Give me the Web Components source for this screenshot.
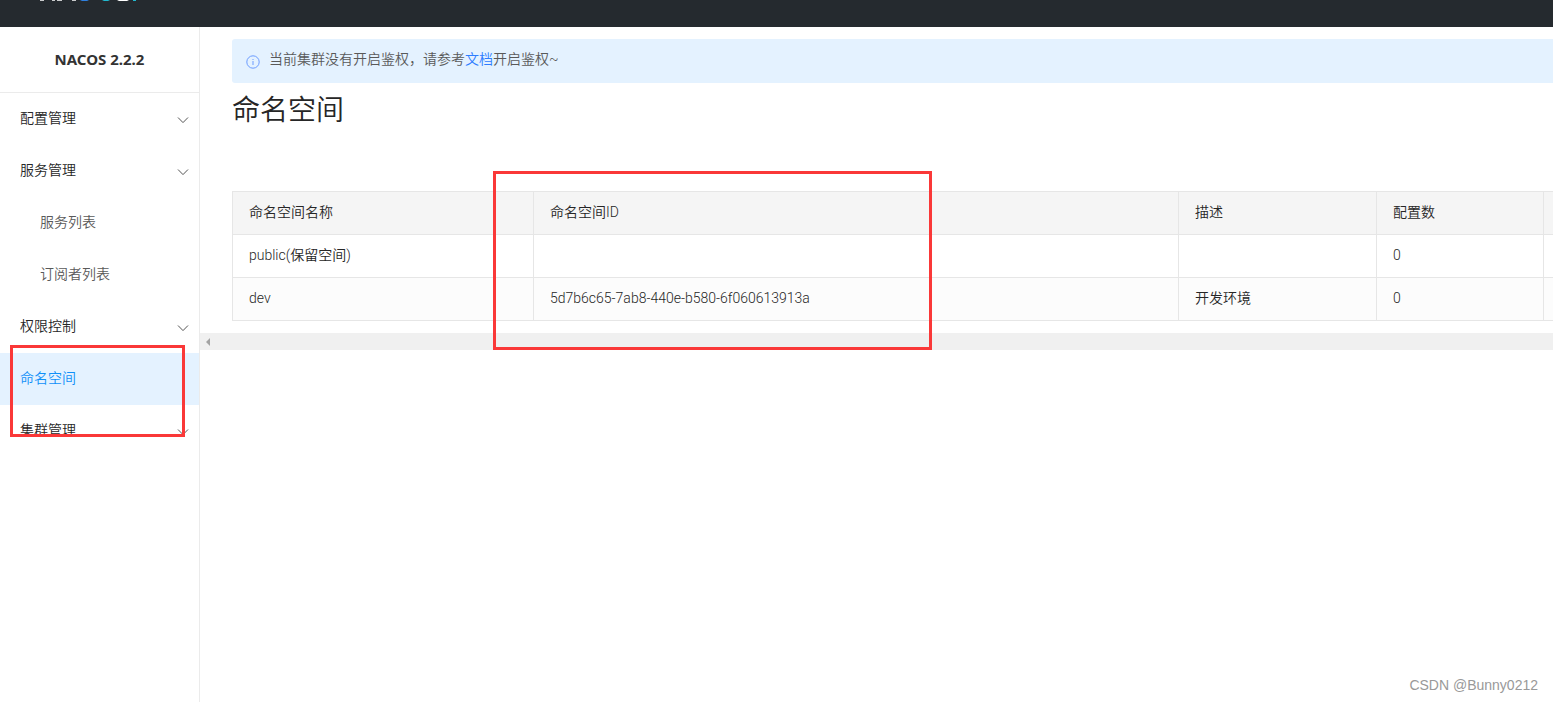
<!DOCTYPE html>
<html lang="zh-CN">
<head>
<meta charset="utf-8">
<title>Nacos</title>
<style>
html,body{margin:0;height:100%}
body{font:350 14px/20px Roboto,"Noto Sans CJK SC",sans-serif;color:#262626;background:#fff;overflow:hidden}
</style>
</head>
<body>
<nacos-app></nacos-app>
<script>
const define=(name,html)=>customElements.define(name,class extends HTMLElement{
  constructor(){
    super();
    const t=document.createElement('template');
    t.innerHTML=html;
    this.attachShadow({mode:'open'}).append(t.content.cloneNode(true));
  }
});

define('top-bar',`
<style>
:host{display:block;height:27px;background:#252a2f}
a{display:block;margin-left:40px;width:100px;height:2px}
svg{display:block}
</style>
<a href="#" aria-label="Nacos"><svg width="100" height="2" viewBox="0 0 100 2">
<path fill="#c9cbcc" d="M0 0h4v1H0zM12 0h3v1h-3zM17 0h5v1h-5zM32 0h4v1h-4z"/>
<path fill="#2f80e0" d="M40 0h9l-2 1h-5z"/><path fill="#22b8cf" d="M62 0h8l-2 1h-4zM93 0h3v1h-3z"/>
<path fill="#fff" d="M77 0h12l-2 1h-8z"/></svg></a>`);

define('menu-item',`
<style>
:host{display:block}
a{display:flex;align-items:center;justify-content:space-between;height:52px;box-sizing:border-box;padding:0 10px 2px 20px;color:inherit;text-decoration:none}
svg{margin-top:4px}
:host([sub]) a{padding-left:40px;color:#595959}
:host([active]) a{background:#e4f2ff;color:#1090f8}
:host(:not([group])) svg{display:none}
</style>
<a href="#"><slot></slot><svg width="12" height="8" viewBox="0 0 12 8" fill="none" stroke="#555"><path d="M1 1.5 6 6.6 11 1.5"/></svg></a>`);

define('side-nav',`
<style>
:host{display:block;flex:0 0 200px;box-sizing:border-box;border-right:1px solid #ebebeb}
h2{margin:0;height:65px;border-bottom:1px solid #ebebeb;color:#333;font:bold 15px/65px "Noto Sans","Noto Sans CJK SC",sans-serif;text-align:center}
</style>
<h2>NACOS 2.2.2</h2>
<nav>
<menu-item group>配置管理</menu-item>
<menu-item group>服务管理</menu-item>
<menu-item sub>服务列表</menu-item>
<menu-item sub>订阅者列表</menu-item>
<menu-item group>权限控制</menu-item>
<menu-item active>命名空间</menu-item>
<menu-item group>集群管理</menu-item>
</nav>`);

define('notice-bar',`
<style>
:host{display:flex;align-items:center;gap:9px;height:44px;box-sizing:border-box;padding:0 14px;background:#e4f2ff;border-radius:3px 0 0 3px;color:#595959}
svg{flex:none;margin-top:2px}
p{margin:0;padding-bottom:4px}
</style>
<svg width="14" height="14" viewBox="0 0 14 14" fill="none" stroke="#6c9cff"><circle cx="7" cy="7" r="6.2"/><path d="M7 6v4M7 4v1"/></svg>
<p><slot></slot></p>`);

define('namespace-table',`
<style>
:host{display:block;overflow:hidden}
table{table-layout:fixed;border-collapse:collapse;width:125%;min-width:1500px}
th,td{box-sizing:border-box;height:43px;padding:0 16px 2px;border:1px solid #e6e6e6;text-align:left;font-weight:inherit;line-height:20px}
th{background:#f5f5f5}
tbody tr:nth-child(even){background:#fcfcfc}
.name{width:301px}.id{width:645px}.desc{width:198px}.count{width:167px}
</style>
<table>
<colgroup><col class="name"><col class="id"><col class="desc"><col class="count"><col></colgroup>
<thead><tr><th>命名空间名称</th><th>命名空间ID</th><th>描述</th><th>配置数</th><th></th></tr></thead>
<tbody>
<tr><td>public(保留空间)</td><td></td><td></td><td>0</td><td></td></tr>
<tr><td>dev</td><td>5d7b6c65-7ab8-440e-b580-6f060613913a</td><td>开发环境</td><td>0</td><td></td></tr>
</tbody></table>`);

define('scroll-track',`
<style>
:host{display:flex;height:17px;background:#f0f0f0}
button{width:17px;padding:0 0 0 6px;border:0;background:none;display:flex;align-items:center}
svg{display:block}
</style>
<button aria-label="向左滚动"><svg width="4" height="8" viewBox="0 0 4 8"><path d="M4 0v8L0 4z" fill="#a3a3a3"/></svg></button>`);

define('mark-box',`
<style>:host{display:block;position:absolute;box-sizing:border-box;border:3px solid #fa3838;pointer-events:none}</style>`);

define('nacos-app',`
<style>
:host{display:flex;flex-direction:column;min-height:100vh;position:relative}
.body{display:flex;flex:1}
main{flex:1;min-width:0}
.page{padding:12px 0 12px 32px}
h1{margin:8px 0 60px;font-size:28px;line-height:40px;font-weight:inherit}
a{color:#2e7dff;text-decoration:none}
.menu-mark{left:10px;top:345px;width:175px;height:92px}
.id-mark{left:493px;top:171px;width:439px;height:179px}
footer{position:absolute;right:15px;bottom:7px;font:14px/20px "Liberation Sans",sans-serif;color:#999}
</style>
<top-bar></top-bar>
<div class="body">
<side-nav></side-nav>
<main>
<div class="page">
<notice-bar>当前集群没有开启鉴权，请参考<a href="#">文档</a>开启鉴权~</notice-bar>
<h1>命名空间</h1>
<namespace-table></namespace-table>
</div>
<scroll-track></scroll-track>
</main>
</div>
<mark-box class="menu-mark"></mark-box>
<mark-box class="id-mark"></mark-box>
<footer>CSDN @Bunny0212</footer>`);
</script>
</body>
</html>
